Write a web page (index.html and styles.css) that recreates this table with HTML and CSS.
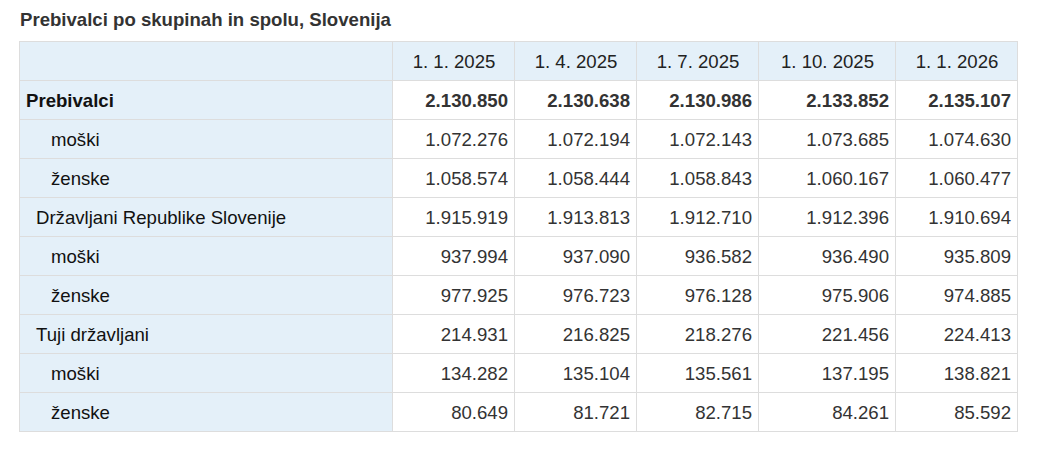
FILE: index.html
```html
<!DOCTYPE html>
<html lang="sl">
<head>
<meta charset="utf-8">
<title>Prebivalci po skupinah in spolu, Slovenija</title>
<link rel="stylesheet" href="styles.css">
</head>
<body>
<div class="wrap">
  <h2 class="title">Prebivalci po skupinah in spolu, Slovenija</h2>
  <table class="data">
    <colgroup>
      <col class="c-label">
      <col class="c-num">
      <col class="c-num">
      <col class="c-num">
      <col class="c-wide">
      <col class="c-num">
    </colgroup>
    <thead>
      <tr>
        <th class="corner"></th>
        <th>1. 1. 2025</th>
        <th>1. 4. 2025</th>
        <th>1. 7. 2025</th>
        <th>1. 10. 2025</th>
        <th>1. 1. 2026</th>
      </tr>
    </thead>
    <tbody>
      <tr class="total">
        <th class="lvl0">Prebivalci</th>
        <td>2.130.850</td><td>2.130.638</td><td>2.130.986</td><td>2.133.852</td><td>2.135.107</td>
      </tr>
      <tr>
        <th class="lvl2">moški</th>
        <td>1.072.276</td><td>1.072.194</td><td>1.072.143</td><td>1.073.685</td><td>1.074.630</td>
      </tr>
      <tr>
        <th class="lvl2">ženske</th>
        <td>1.058.574</td><td>1.058.444</td><td>1.058.843</td><td>1.060.167</td><td>1.060.477</td>
      </tr>
      <tr>
        <th class="lvl1">Državljani Republike Slovenije</th>
        <td>1.915.919</td><td>1.913.813</td><td>1.912.710</td><td>1.912.396</td><td>1.910.694</td>
      </tr>
      <tr>
        <th class="lvl2">moški</th>
        <td>937.994</td><td>937.090</td><td>936.582</td><td>936.490</td><td>935.809</td>
      </tr>
      <tr>
        <th class="lvl2">ženske</th>
        <td>977.925</td><td>976.723</td><td>976.128</td><td>975.906</td><td>974.885</td>
      </tr>
      <tr>
        <th class="lvl1">Tuji državljani</th>
        <td>214.931</td><td>216.825</td><td>218.276</td><td>221.456</td><td>224.413</td>
      </tr>
      <tr>
        <th class="lvl2">moški</th>
        <td>134.282</td><td>135.104</td><td>135.561</td><td>137.195</td><td>138.821</td>
      </tr>
      <tr>
        <th class="lvl2">ženske</th>
        <td>80.649</td><td>81.721</td><td>82.715</td><td>84.261</td><td>85.592</td>
      </tr>
    </tbody>
  </table>
</div>
</body>
</html>
```

FILE: styles.css
```css
html, body {
  margin: 0;
  padding: 0;
  background: #ffffff;
}

body {
  font-family: "Liberation Sans", Arial, sans-serif;
  color: #222222;
}

.wrap {
  padding: 9px 0 0 19px;
}

.title {
  margin: 0 0 10px 1px;
  font-size: 18.6px;
  line-height: 22px;
  font-weight: bold;
  color: #333333;
}

.data {
  border-collapse: collapse;
  table-layout: fixed;
  width: 999px;
  font-size: 18.6px;
}

.c-label { width: 373px; }
.c-num { width: 122px; }
.c-wide { width: 137px; }

.data th,
.data td {
  border: 1px solid #dddddd;
  height: 39px;
  padding: 0 6px 0 7px;
  box-sizing: border-box;
  line-height: 21px;
  vertical-align: middle;
  white-space: nowrap;
}

.data thead th {
  background: #e4f0f9;
  font-weight: normal;
  text-align: center;
  color: #222222;
}

.data tbody th {
  background: #e4f0f9;
  font-weight: normal;
  text-align: left;
  color: #111111;
}

.data td {
  text-align: right;
  color: #333333;
}

.data tbody th.lvl0 {
  font-weight: bold;
  padding-left: 6px;
}

.data tbody th.lvl1 { padding-left: 16px; }
.data tbody th.lvl2 { padding-left: 31px; }

.total td {
  font-weight: bold;
  color: #333333;
}
```
